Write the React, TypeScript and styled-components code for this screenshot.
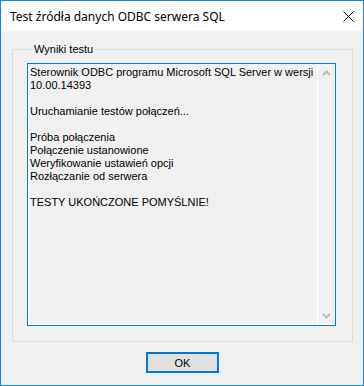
import React from "react";
import styled, { createGlobalStyle } from "styled-components";

const Global = createGlobalStyle`
  html, body { margin: 0; padding: 0; background: #ffffff; }
  #root { width: 364px; height: 386px; }
  * { box-sizing: border-box; }
`;

const Window = styled.div`
  width: 364px;
  height: 386px;
  border: 1px solid #1883d7;
  display: flex;
  flex-direction: column;
  background: #f0f0f0;
`;

const TitleBar = styled.div`
  height: 30px;
  flex: none;
  background: #ffffff;
  display: flex;
  align-items: center;
  padding-left: 9px;
  padding-right: 9px;
  justify-content: space-between;
`;

const Title = styled.span`
  font-family: "Noto Sans", "Segoe UI", sans-serif;
  font-size: 12px;
  color: #000000;
  padding-top: 1px;
`;

const CloseButton = styled.div`
  width: 12px;
  height: 12px;
  display: flex;
  align-items: center;
  justify-content: center;
  margin-right: 0px;
`;

const Body = styled.div`
  flex: 1;
  display: flex;
  flex-direction: column;
  align-items: center;
  padding-top: 11px;
`;

const GroupBox = styled.fieldset`
  margin: 0 10px 0 11px;
  align-self: stretch;
  height: 300px;
  border: 1px solid #dcdcdc;
  padding: 7px 16px 14px 14px;
  min-width: 0;
`;

const GroupLabel = styled.legend`
  font-family: "Liberation Sans", Arial, sans-serif;
  font-size: 11px;
  line-height: 14px;
  padding: 0 1px;
  margin-left: 6px;
  color: #000000;
`;

const TextBox = styled.div`
  width: 309px;
  height: 263px;
  border: 1px solid #0078d7;
  box-shadow: inset 1px -1px 0 #ffffff;
  display: flex;
  background: #f0f0f0;
`;

const TextArea = styled.div`
  flex: 1;
  padding: 2px 0 0 2px;
  font-family: "Liberation Sans", Arial, sans-serif;
  font-size: 11px;
  line-height: 13px;
  color: #000000;
`;

const Line = styled.div`
  height: 13px;
  white-space: nowrap;
`;

const ScrollBar = styled.div`
  width: 18px;
  border-left: 1px solid #ffffff;
  display: flex;
  flex-direction: column;
  justify-content: space-between;
  align-items: center;
  background: #f0f0f0;
  margin-bottom: 1px;
`;

const ArrowBox = styled.div`
  width: 17px;
  height: 17px;
  display: flex;
  align-items: center;
  justify-content: center;
`;

const ButtonRow = styled.div`
  margin-top: 10px;
  display: flex;
  justify-content: center;
`;

const Button = styled.button`
  width: 73px;
  height: 21px;
  margin-left: 1px;
  border: 2px solid #0078d7;
  background: #e1e1e1;
  font-family: "Liberation Sans", Arial, sans-serif;
  font-size: 11px;
  color: #000000;
  padding: 0;
`;

const Chevron: React.FC<{ up?: boolean }> = ({ up }) => (
  <svg width="9" height="6" viewBox="0 0 9 6">
    <polyline
      points={up ? "1,5 4.5,1.5 8,5" : "1,1 4.5,4.5 8,1"}
      fill="none"
      stroke="#bcbcbc"
      strokeWidth="2"
    />
  </svg>
);

const lines = [
  "Sterownik ODBC programu Microsoft SQL Server w wersji",
  "10.00.14393",
  "",
  "Uruchamianie testów połączeń...",
  "",
  "Próba połączenia",
  "Połączenie ustanowione",
  "Weryfikowanie ustawień opcji",
  "Rozłączanie od serwera",
  "",
  "TESTY UKOŃCZONE POMYŚLNIE!",
];

export default function App() {
  return (
    <>
      <Global />
      <Window>
        <TitleBar>
          <Title>Test źródła danych ODBC serwera SQL</Title>
          <CloseButton>
            <svg width="11" height="11" viewBox="0 0 11 11">
              <path d="M0.5 0.5 L10.5 10.5 M10.5 0.5 L0.5 10.5" stroke="#000" strokeWidth="1" fill="none" />
            </svg>
          </CloseButton>
        </TitleBar>
        <Body>
          <GroupBox>
            <GroupLabel>Wyniki testu</GroupLabel>
            <TextBox>
              <TextArea>
                {lines.map((l, i) => (
                  <Line key={i}>{l}</Line>
                ))}
              </TextArea>
              <ScrollBar>
                <ArrowBox>
                  <Chevron up />
                </ArrowBox>
                <ArrowBox>
                  <Chevron />
                </ArrowBox>
              </ScrollBar>
            </TextBox>
          </GroupBox>
          <ButtonRow>
            <Button>OK</Button>
          </ButtonRow>
        </Body>
      </Window>
    </>
  );
}
